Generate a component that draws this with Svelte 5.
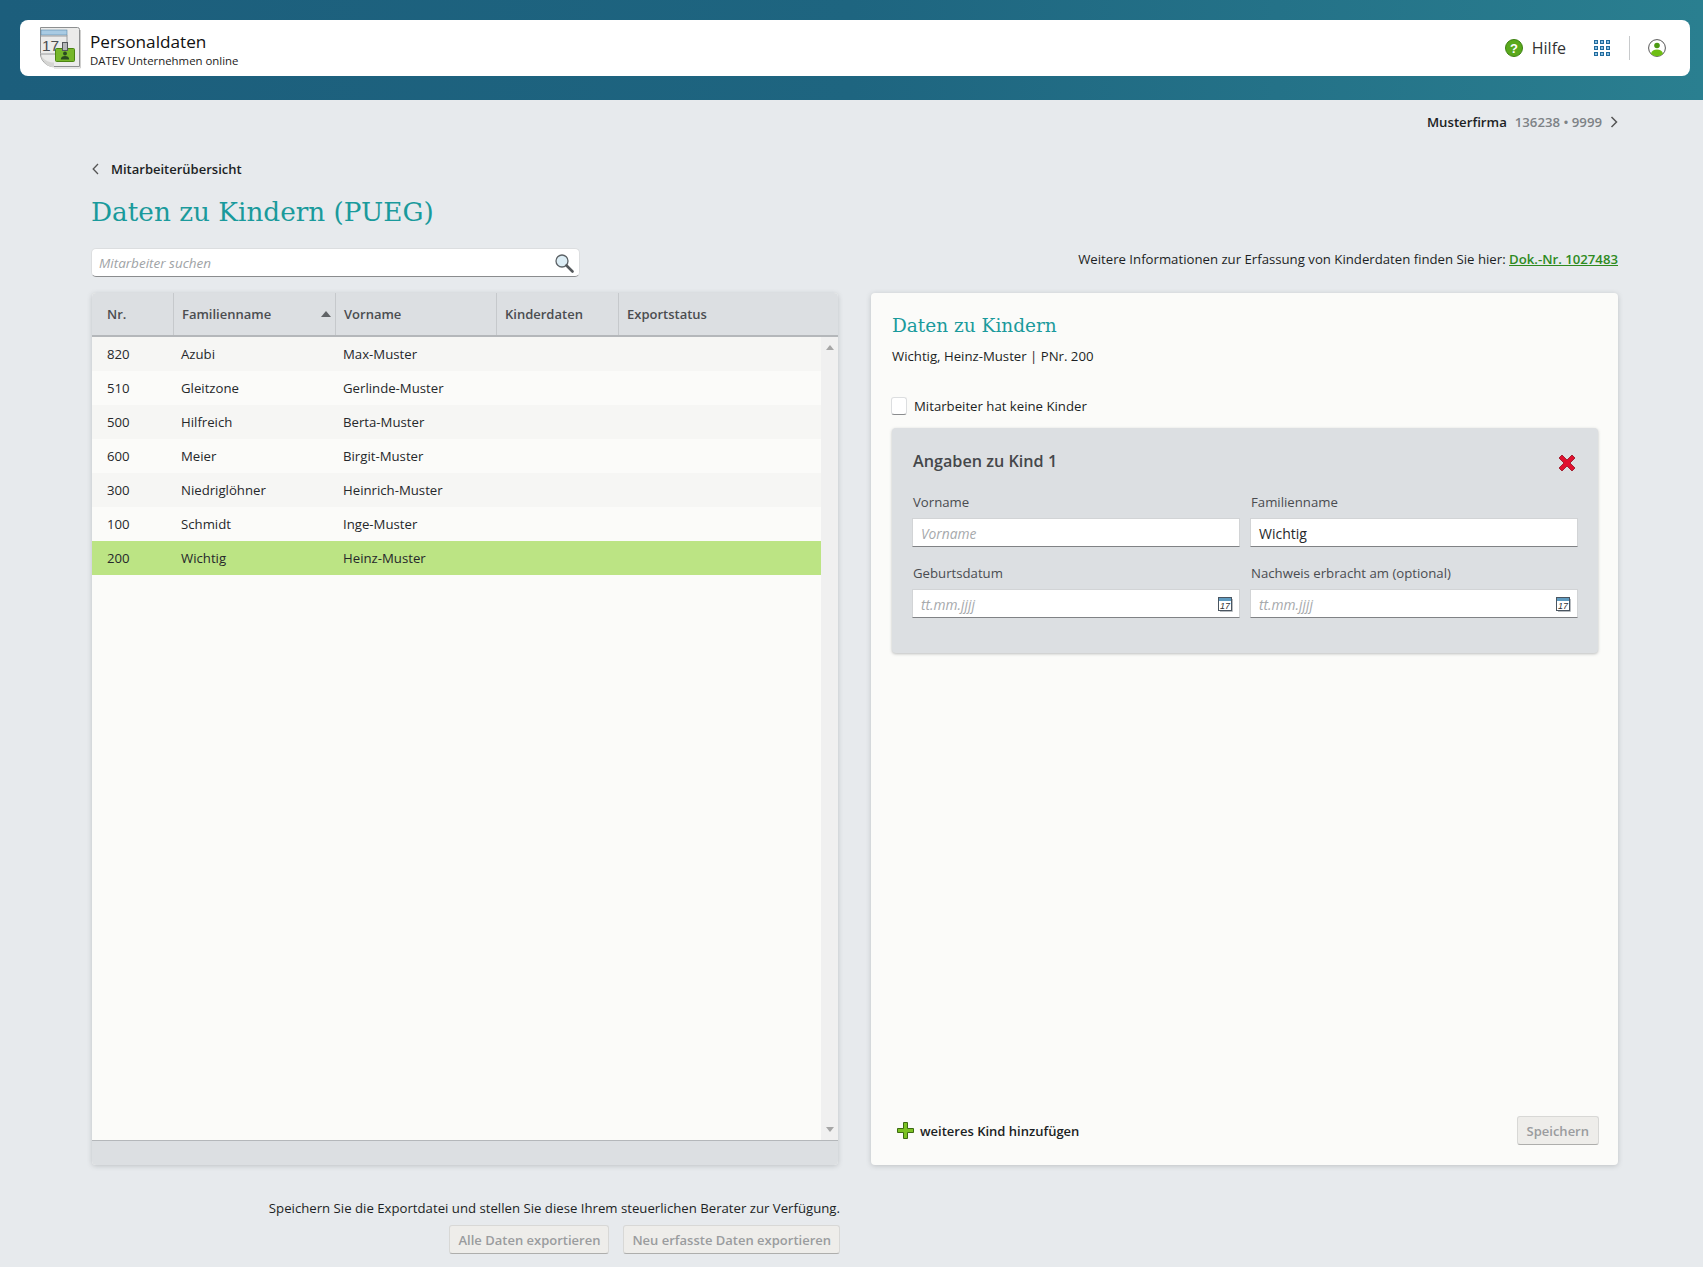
<script lang="ts">
	const employees = [
		{ nr: 820, last: 'Azubi', first: 'Max-Muster' },
		{ nr: 510, last: 'Gleitzone', first: 'Gerlinde-Muster' },
		{ nr: 500, last: 'Hilfreich', first: 'Berta-Muster' },
		{ nr: 600, last: 'Meier', first: 'Birgit-Muster' },
		{ nr: 300, last: 'Niedriglöhner', first: 'Heinrich-Muster' },
		{ nr: 100, last: 'Schmidt', first: 'Inge-Muster' },
		{ nr: 200, last: 'Wichtig', first: 'Heinz-Muster' }
	];
	const selected = 200;
	const gridDots = [0, 6, 12].flatMap((y) => [0, 6, 12].map((x) => ({ x, y })));
</script>

{#snippet calendar()}
	<svg class="cal" width="15" height="15" viewBox="0 0 15 15" aria-hidden="true">
		<rect x="0.5" y="0.5" width="13" height="13" fill="#fff" stroke="#4a5560" />
		<rect x="1" y="1" width="12" height="3" fill="#5f9bc0" />
		<text x="7" y="12.200" class="cal-day">17</text>
		<path d="M14.500 2v12.500H2" fill="none" stroke="#b8bcc0" />
	</svg>
{/snippet}

<header class="top">
	<div class="bar">
		<svg class="logo" width="44" height="44" viewBox="0 0 44 44" aria-hidden="true">
			<path d="M2.500 1.500h37a2 2 0 0 1 2 2v37h-26c-7 0-13-6-13-13z" fill="#ebebea" stroke="#8d8f90" />
			<path d="M16 41.500c-5 0-12-5-13-12 4 6 9 7 13 7z" fill="#d5d5d3" />
			<path d="M42.500 4v38H16" fill="none" stroke="#cfcfce" />
			<rect x="3" y="4" width="26" height="5" fill="#a9cbe3" stroke="#5b8bab" stroke-width="0.6" />
			<path d="M3 10h26M3 28h15M29 9v8" stroke="#9a9c9e" fill="none" />
			<text x="4" y="25" class="logo-day">17</text>
			<rect x="17.500" y="22.500" width="19" height="13" rx="1" fill="#76b72a" stroke="#4b8412" />
			<rect x="24.500" y="16.500" width="5" height="8" fill="#b4b6b8" stroke="#54585c" stroke-width="1" />
			<circle cx="27" cy="27.500" r="1.900" fill="#2a4a20" />
			<path d="M22.800 33.500c0-2.500 1.800-3.500 4.200-3.500s4.200 1 4.200 3.500z" fill="#2a4a20" />
		</svg>
		<div class="app-name">
			<div class="app-title">Personaldaten</div>
			<div class="app-sub">DATEV Unternehmen online</div>
		</div>
		<div class="bar-actions">
			<svg width="18" height="18" viewBox="0 0 18 18" aria-hidden="true">
				<circle cx="9" cy="9" r="8.500" fill="#5aa91c" stroke="#3d8012" />
				<text x="9" y="13.500" class="help-mark">?</text>
			</svg>
			<span class="help-label">Hilfe</span>
			<svg class="apps" width="16" height="16" viewBox="0 0 16 16" aria-hidden="true">
				{#each gridDots as dot}
					<rect x={dot.x + 0.5} y={dot.y + 0.5} width="3" height="3" fill="#8fc0e2" stroke="#1f6a9c" />
				{/each}
			</svg>
			<span class="sep"></span>
			<svg width="18" height="18" viewBox="0 0 18 18" aria-hidden="true">
				<circle cx="9" cy="9" r="8.400" fill="#fff" stroke="#555" />
				<circle cx="9" cy="6.500" r="2.800" fill="#4c9a12" />
				<path d="M3 14.500c.6-2.800 3-4 6-4s5.400 1.200 6 4c-1.500 1.700-3.700 2.800-6 2.800s-4.500-1.100-6-2.800z" fill="#6fbf14" />
			</svg>
		</div>
	</div>
</header>

<div class="company">
	<b>Musterfirma</b>
	<span class="company-nr">136238 • 9999</span>
	<svg width="8" height="12" viewBox="0 0 8 12" aria-hidden="true"><path d="M1.500 1l5 5-5 5" fill="none" stroke="#555" stroke-width="1.500" /></svg>
</div>

<main class="content">
	<div class="back">
		<svg width="7" height="12" viewBox="0 0 7 12" aria-hidden="true"><path d="M6 1L1.200 6 6 11" fill="none" stroke="#555" stroke-width="1.300" /></svg>
		<span>Mitarbeiterübersicht</span>
	</div>
	<h1>Daten zu Kindern (PUEG)</h1>

	<div class="toolbar">
		<div class="search">
			<span>Mitarbeiter suchen</span>
			<svg width="20" height="20" viewBox="0 0 20 20" aria-hidden="true">
				<circle cx="8" cy="8" r="6" fill="#dcedf5" stroke="#5c6266" stroke-width="1.300" />
				<path d="M12.500 12.500l6 6" stroke="#55595c" stroke-width="2.600" stroke-linecap="round" />
			</svg>
		</div>
		<p class="info">Weitere Informationen zur Erfassung von Kinderdaten finden Sie hier: <a href="#doc">Dok.-Nr. 1027483</a></p>
	</div>

	<div class="columns">
		<section class="table">
			<div class="row head">
				<div>Nr.</div>
				<div class="sorted">Familienname<i class="sort"></i></div>
				<div>Vorname</div>
				<div>Kinderdaten</div>
				<div>Exportstatus</div>
			</div>
			<div class="table-body">
				<div class="rows">
					{#each employees as e (e.nr)}
						<div class="row" class:active={e.nr === selected}>
							<div>{e.nr}</div>
							<div>{e.last}</div>
							<div>{e.first}</div>
							<div></div>
							<div></div>
						</div>
					{/each}
				</div>
				<div class="scroll">
					<i class="up"></i>
					<i class="down"></i>
				</div>
			</div>
			<div class="table-foot"></div>
		</section>

		<section class="detail">
			<h2>Daten zu Kindern</h2>
			<p class="who">Wichtig, Heinz-Muster | PNr. 200</p>
			<div class="check">
				<span class="box"></span>
				<span>Mitarbeiter hat keine Kinder</span>
			</div>

			<div class="child">
				<div class="child-head">
					<h3>Angaben zu Kind 1</h3>
					<svg width="18" height="18" viewBox="0 0 18 18" aria-hidden="true">
						<path d="M1 4L4 1 9 6 14 1 17 4 12 9 17 14 14 17 9 12 4 17 1 14 6 9z" fill="#e0112f" stroke="#96101f" stroke-width="0.800" />
					</svg>
				</div>
				<div class="fields">
					<label>
						<span>Vorname</span>
						<div class="input ph">Vorname</div>
					</label>
					<label>
						<span>Familienname</span>
						<div class="input">Wichtig</div>
					</label>
					<label>
						<span>Geburtsdatum</span>
						<div class="input ph">tt.mm.jjjj{@render calendar()}</div>
					</label>
					<label>
						<span>Nachweis erbracht am (optional)</span>
						<div class="input ph">tt.mm.jjjj{@render calendar()}</div>
					</label>
				</div>
			</div>

			<div class="detail-foot">
				<div class="add">
					<svg width="17" height="17" viewBox="0 0 17 17" aria-hidden="true">
						<path d="M6.500 .5h4v6h6v4h-6v6h-4v-6h-6v-4h6z" fill="#7cc224" stroke="#3c6a12" />
					</svg>
					<span>weiteres Kind hinzufügen</span>
				</div>
				<button class="btn" disabled>Speichern</button>
			</div>
		</section>
	</div>

	<div class="export">
		<p>Speichern Sie die Exportdatei und stellen Sie diese Ihrem steuerlichen Berater zur Verfügung.</p>
		<div class="export-btns">
			<button class="btn" disabled>Alle Daten exportieren</button>
			<button class="btn" disabled>Neu erfasste Daten exportieren</button>
		</div>
	</div>
</main>

<style>
	:global(body) {
		margin: 0;
		background: #e7eaed;
		color: #1c1f24;
		font-family: 'Open Sans', 'Noto Sans', sans-serif;
		font-size: 13.2px;
	}

	.top {
		height: 100px;
		box-sizing: border-box;
		padding: 20px 13px 24px 20px;
		background: linear-gradient(90deg, #1c5e7c 0%, #1e6580 50%, #2a7f90 100%);
	}

	.bar {
		height: 56px;
		display: flex;
		align-items: center;
		padding: 0 24px 0 18px;
		background: #fff;
		border-radius: 8px;
	}

	.logo {
		margin-right: 8px;
	}

	.logo-day {
		font-family: 'Liberation Sans', sans-serif;
		font-size: 15.500px;
		fill: #4a4d50;
	}

	.cal-day {
		font-family: 'Liberation Sans', sans-serif;
		font-size: 9px;
		fill: #333;
		text-anchor: middle;
	}

	.app-name {
		margin-top: 1px;
	}

	.app-title {
		font-size: 17.2px;
		line-height: 23px;
		color: #111;
	}

	.app-sub {
		font-size: 11.4px;
		line-height: 15px;
		color: #222;
	}

	.bar-actions {
		margin-left: auto;
		display: flex;
		align-items: center;
	}

	.help-mark {
		font-family: 'Liberation Sans', sans-serif;
		font-size: 13px;
		font-weight: 700;
		fill: #fff;
		text-anchor: middle;
	}

	.help-label {
		margin-left: 9px;
		font-size: 16px;
		color: #333;
	}

	.apps {
		margin-left: 28px;
	}

	.sep {
		width: 1px;
		height: 24px;
		margin: 0 18px 0 19px;
		background: #c8cacc;
	}

	.company {
		height: 44px;
		display: flex;
		align-items: center;
		justify-content: flex-end;
		gap: 8px;
		padding-right: 85px;
	}

	.company b {
		font-weight: 600;
	}

	.company-nr {
		color: #7d8286;
		font-weight: 600;
	}

	.content {
		padding: 14px 85px 0 92px;
	}

	.back {
		height: 22px;
		display: flex;
		align-items: center;
		gap: 12px;
		font-size: 13px;
		font-weight: 600;
	}

	h1 {
		margin: 12px 0 0 -1px;
		height: 40px;
		font-family: 'DejaVu Serif', 'Liberation Serif', serif;
		font-size: 26.3px;
		line-height: 40px;
		font-weight: 400;
		color: #1a9a9c;
	}

	.toolbar {
		margin: 16px 0 0 -1px;
		display: flex;
		justify-content: space-between;
	}

	.search {
		width: 489px;
		height: 29px;
		box-sizing: border-box;
		display: flex;
		align-items: center;
		justify-content: space-between;
		padding: 0 5px 0 7px;
		background: #fff;
		border: 1px solid #dcdee0;
		border-bottom: 1px solid #8a8c8e;
		border-radius: 5px;
		font-size: 13.5px;
		font-style: italic;
		color: #a0a3a6;
	}

	.info {
		margin: 1px 0 0;
		line-height: 20px;
	}

	.info a {
		color: #2e8a1e;
		font-weight: 600;
	}

	.columns {
		margin-top: 16px;
		display: grid;
		grid-template-columns: 746px 747px;
		gap: 33px;
		height: 872px;
	}

	.table,
	.detail {
		box-sizing: border-box;
		background: #fbfbf9;
		border-radius: 4px;
		box-shadow: 0 1px 5px rgba(70, 75, 80, 0.25);
	}

	.table {
		display: flex;
		flex-direction: column;
		overflow: hidden;
	}

	.row {
		display: grid;
		grid-template-columns: 82px 162px 161px 122px 1fr;
		height: 34px;
		align-items: center;
		background: #fbfbf9;
	}

	.row > div {
		padding-left: 15px;
		color: #26282b;
	}

	.row > div:nth-child(2) {
		padding-left: 7px;
	}

	.row > div:nth-child(n + 3) {
		padding-left: 7px;
	}

	.rows .row:nth-child(odd) {
		background: #f6f6f4;
	}

	.rows .row.active {
		background: #bce484;
	}

	.head {
		height: 44px;
		box-sizing: border-box;
		align-items: stretch;
		background: #dcdfe2;
		border-bottom: 2px solid #b4b7ba;
		font-size: 13px;
		font-weight: 600;
	}

	.head > div {
		display: flex;
		align-items: center;
		color: #4b4d50;
		border-right: 1px solid #c6c9cc;
	}

	.head > div:nth-child(n + 2) {
		padding-left: 8px;
	}

	.head > div:last-child {
		border-right: 0;
	}

	.sorted {
		position: relative;
	}

	.sort {
		position: absolute;
		right: 4px;
		top: 18px;
		border: 5px solid transparent;
		border-top: 0;
		border-bottom: 6px solid #606366;
	}

	.table-body {
		flex: 1;
		display: flex;
		min-height: 0;
	}

	.rows {
		flex: 1;
	}

	.scroll {
		width: 17px;
		display: flex;
		flex-direction: column;
		justify-content: space-between;
		align-items: center;
		padding: 8px 0;
		box-sizing: border-box;
		background: #f0f0f0;
	}

	.up {
		border: 4px solid transparent;
		border-top: 0;
		border-bottom: 5px solid #a6a6a6;
	}

	.down {
		border: 4px solid transparent;
		border-bottom: 0;
		border-top: 5px solid #a6a6a6;
	}

	.table-foot {
		height: 25px;
		box-sizing: border-box;
		background: #dcdfe2;
		border-top: 1px solid #b4b7ba;
	}

	.detail {
		display: flex;
		flex-direction: column;
		padding: 20px 19px 20px 21px;
	}

	h2 {
		margin: 0;
		font-family: 'DejaVu Serif', 'Liberation Serif', serif;
		font-size: 18.5px;
		line-height: 26px;
		font-weight: 400;
		color: #1a9a9c;
	}

	.who {
		margin: 7px 0 0;
		line-height: 20px;
	}

	.check {
		margin: 30px 0 0 -1px;
		height: 20px;
		display: flex;
		align-items: center;
		gap: 7px;
	}

	.box {
		width: 16px;
		height: 18px;
		box-sizing: border-box;
		background: #fff;
		border: 1px solid #dcdee0;
		border-bottom: 1px solid #8a8c8e;
		border-radius: 3px;
	}

	.child {
		margin: 12px 1px 0 0;
		height: 225px;
		box-sizing: border-box;
		padding: 20px 20px 0 20px;
		background: #dcdfe2;
		border-radius: 4px;
		box-shadow: 0 1px 3px rgba(70, 75, 80, 0.35);
	}

	.child-head {
		display: flex;
		justify-content: space-between;
		align-items: center;
		padding-right: 2px;
	}

	.child-head svg {
		margin-top: 3px;
	}

	h3 {
		margin: 0 0 0 1px;
		font-size: 16.2px;
		line-height: 26px;
		font-weight: 600;
		color: #45474a;
	}

	.fields {
		margin-top: 18px;
		display: grid;
		grid-template-columns: 328px 328px;
		gap: 16px 10px;
	}

	label {
		display: block;
	}

	label > span {
		display: block;
		line-height: 20px;
		margin-bottom: 6px;
		padding-left: 1px;
		color: #4a4c50;
	}

	.input {
		height: 29px;
		box-sizing: border-box;
		display: flex;
		align-items: center;
		justify-content: space-between;
		padding: 1px 6px 0 8px;
		background: #fff;
		border: 1px solid #d2d4d6;
		border-bottom: 1px solid #808285;
		font-size: 14px;
		color: #26282b;
	}

	.ph {
		font-size: 13.8px;
		font-style: italic;
		color: #a6a9ac;
	}

	.detail-foot {
		margin-top: auto;
		display: flex;
		justify-content: space-between;
		align-items: center;
	}

	.add {
		display: flex;
		align-items: center;
		gap: 6px;
		padding-left: 5px;
		font-size: 13px;
		font-weight: 600;
	}

	.btn {
		height: 29px;
		box-sizing: border-box;
		padding: 0 9px;
		background: #eeedea;
		border: 1px solid #d8d8d6;
		border-bottom-color: #aeaeac;
		border-radius: 3px;
		font-family: inherit;
		font-size: 13px;
		font-weight: 600;
		color: #9a9c9e;
	}

	.export {
		width: 748px;
		margin-top: 33px;
		display: flex;
		flex-direction: column;
		align-items: flex-end;
	}

	.export p {
		margin: 0;
		line-height: 20px;
	}

	.export-btns {
		margin-top: 7px;
		padding-bottom: 13px;
		display: flex;
		gap: 14px;
	}

	.export-btns .btn {
		padding: 0 8px;
	}
</style>
